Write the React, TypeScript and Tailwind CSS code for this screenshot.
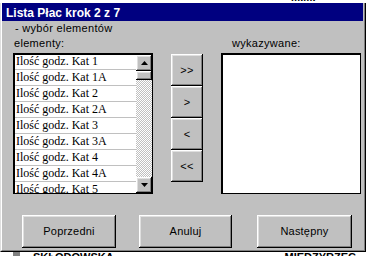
const items = [
  'Ilość godz. Kat 1',
  'Ilość godz. Kat 1A',
  'Ilość godz. Kat 2',
  'Ilość godz. Kat 2A',
  'Ilość godz. Kat 3',
  'Ilość godz. Kat 3A',
  'Ilość godz. Kat 4',
  'Ilość godz. Kat 4A',
  'Ilość godz. Kat 5',
];

const raised =
  'bg-[#c0c0c0] shadow-[inset_-1px_-1px_0_#000000,inset_1px_1px_0_#ffffff,inset_-2px_-2px_0_#808080,inset_2px_2px_0_#dfdfdf]';

const Arrow = ({ down }: { down?: boolean }) => (
  <svg width="7" height="4" viewBox="0 0 7 4">
    {down ? <polygon points="0,0 7,0 3.5,4" fill="#000" /> : <polygon points="0,4 7,4 3.5,0" fill="#000" />}
  </svg>
);

const ScrollBar = () => (
  <div className="flex flex-col w-[16px] h-full shrink-0">
    <div className={`${raised} h-[16px] flex items-center justify-center`}>
      <Arrow />
    </div>
    <div className={`${raised} h-[9px]`} />
    <div className="flex-1 bg-[image:repeating-conic-gradient(#c0c0c0_0_25%,#ffffff_0_50%)] bg-[length:2px_2px]" />
    <div className={`${raised} h-[16px] flex items-center justify-center`}>
      <Arrow down />
    </div>
  </div>
);

export default function App() {
  return (
    <div className="w-[368px] h-[256px] bg-white overflow-hidden flex flex-col font-['Liberation_Sans',Arial,sans-serif] text-black">
      <div className="h-[3px] shrink-0 overflow-hidden pl-[291px] text-[11px] leading-[11px] font-bold">
        <div className="-mt-[8px]">MIMI</div>
      </div>

      <div className="w-[366px] h-[249px] shrink-0 flex border-l border-l-[#dfdfdf] border-r border-r-black border-b border-b-black">
        <div className="flex-1 flex flex-col bg-[#c0c0c0] border-l border-l-white border-r border-r-[#808080] border-b border-b-[#808080] pr-px">
          <div className="h-[18px] shrink-0 bg-[#000080] text-white font-bold text-[12px] leading-[18px] pl-[4px] pt-px">
            Lista Płac krok 2 z 7
          </div>

          <div className="text-[11px] leading-[13px] tracking-[0.3px] pl-[13px] mt-px">- wybór elementów</div>

          <div className="flex items-start mt-[2px] ml-[11px] text-[11px] leading-[13px] tracking-[0.3px]">
            <div className="flex flex-col w-[140px]">
              <div className="pl-px">elementy:</div>
              <div className="mt-[3px] h-[141px] flex bg-white border-t-2 border-l-2 border-r border-b border-black overflow-hidden tracking-normal">
                <div className="flex-1 overflow-hidden font-['Liberation_Serif','Times_New_Roman',serif] text-[12px] leading-[15px]">
                  <div className="-mt-px">
                    {items.map((it) => (
                      <div key={it} className="h-[16px] pl-px border-b border-b-[#c0c0c0] whitespace-nowrap">
                        {it}
                      </div>
                    ))}
                  </div>
                </div>
                <ScrollBar />
              </div>
            </div>

            <div className="flex flex-col ml-[18px] mt-[17px] w-[32px]">
              {['>>', '>', '<', '<<'].map((l) => (
                <div key={l} className={`${raised} h-[32px] flex items-center justify-center`}>
                  {l}
                </div>
              ))}
            </div>

            <div className="flex flex-col ml-[18px] w-[140px]">
              <div className="pl-[11px]">wykazywane:</div>
              <div className="mt-[3px] h-[141px] bg-white border-t-2 border-l-2 border-r border-b border-black" />
            </div>
          </div>

          <div className="flex mt-[21px] ml-[20px] text-[11px] tracking-[0.2px]">
            <div className={`${raised} w-[94px] h-[33px] flex items-center justify-center`}>Poprzedni</div>
            <div className={`${raised} w-[93px] h-[33px] ml-[23px] flex items-center justify-center`}>Anuluj</div>
            <div className={`${raised} w-[95px] h-[33px] ml-[25px] flex items-center justify-center`}>Następny</div>
          </div>
        </div>
      </div>

      <div className="flex-1 overflow-hidden flex items-start text-[11px] leading-[11px] font-bold">
        <div className="w-[7px] h-[4px] bg-[#808080] ml-[13px]" />
        <div className="ml-[13px]">SKŁODOWSKA</div>
        <div className="ml-auto mr-[12px]">MIĘDZYRZEC</div>
      </div>
    </div>
  );
}
